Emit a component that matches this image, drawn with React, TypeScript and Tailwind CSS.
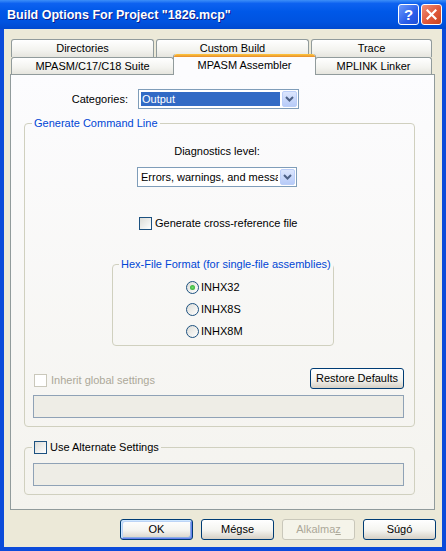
import React from 'react';

// XP "Luna" style build options dialog

function Chevron() {
  return (
    <svg width="9" height="6" viewBox="0 0 9 6">
      <path d="M1 1 L4.5 4.5 L8 1" fill="none" stroke="#4D6185" strokeWidth="2" />
    </svg>
  );
}

function Combo({ value, selected, className }: { value: string; selected?: boolean; className: string }) {
  return (
    <div className={`flex h-[20px] items-stretch gap-[1px] border border-[#7F9DB9] bg-white p-[1px] ${className}`}>
      <div
        className={`m-[1px] flex flex-1 items-center overflow-hidden whitespace-nowrap px-[1px] ${
          selected ? 'bg-[#316AC5] text-white' : 'text-black'
        }`}
      >
        {value}
      </div>
      <div className="flex w-[15px] items-center justify-center rounded-[2px] border border-[#BBCEF8] bg-[linear-gradient(to_bottom,#DCE6FD,#B7CBF8)]">
        <Chevron />
      </div>
    </div>
  );
}

function CheckBox({ disabled }: { disabled?: boolean }) {
  return (
    <span
      className={`inline-block h-[13px] w-[13px] shrink-0 border ${
        disabled ? 'border-[#CAC8BB] bg-white' : 'border-[#1C5180] bg-[linear-gradient(135deg,#DCDCD7,#FFFFFF)]'
      }`}
    />
  );
}

function Radio({ checked }: { checked?: boolean }) {
  return (
    <span className="flex h-[13px] w-[13px] shrink-0 items-center justify-center rounded-full border border-[#1C5180] bg-[linear-gradient(135deg,#DCDCD7,#FFFFFF)]">
      {checked && <span className="h-[5px] w-[5px] rounded-full bg-[radial-gradient(circle,#6FDC6F,#21A121)]" />}
    </span>
  );
}

function XPButton({
  children,
  className = 'w-[73px]',
  isDefault,
  disabled,
}: {
  children: React.ReactNode;
  className?: string;
  isDefault?: boolean;
  disabled?: boolean;
}) {
  if (disabled) {
    return (
      <button className={`h-[21px] rounded-[3px] border border-[#C9C7BA] bg-[#F5F4EA] text-[#ACA899] ${className}`}>
        {children}
      </button>
    );
  }
  return (
    <button
      className={`h-[21px] rounded-[3px] border border-[#003C74] bg-[linear-gradient(to_bottom,#FFFFFF,#F4F4F0_55%,#D6D0C5)] text-black ${
        isDefault
          ? 'shadow-[inset_1px_1px_0_#CEE7FF,inset_-1px_-1px_0_#6982EE,inset_2px_2px_0_#BCD4F6,inset_-2px_-2px_0_#89ADE4]'
          : ''
      } ${className}`}
    >
      {children}
    </button>
  );
}

function Tab({ label, className }: { label: string; className: string }) {
  return (
    <div
      className={`flex items-center justify-center rounded-t-[3px] border border-b-0 border-[#919B9C] bg-[linear-gradient(to_bottom,#FFFFFF,#F3F3EF_60%,#E6E5DE)] ${className}`}
    >
      {label}
    </div>
  );
}

function ActiveTab({ label, className }: { label: string; className: string }) {
  return (
    <div className={`relative z-10 -mb-px -mt-[3px] flex flex-col rounded-t-[3px] border-x border-[#919B9C] bg-[#FCFCFE] ${className}`}>
      <div className="h-[3px] rounded-t-[3px] bg-[linear-gradient(to_bottom,#FFC83C,#E68B2C)]" />
      <div className="flex flex-1 items-start justify-center pt-[2px]">{label}</div>
    </div>
  );
}

function Field() {
  return <div className="ml-[8px] h-[23px] w-[371px] border border-[#8FA2B6] bg-[#EEEDE6]" />;
}

export default function App() {
  return (
    <div className="flex h-[551px] w-[446px] flex-col bg-[#0B4BDA] text-[11px] leading-[13px] text-black [font-family:'Liberation_Sans',Arial,sans-serif]">
      {/* title bar */}
      <div className="flex h-[29px] shrink-0 items-center justify-between bg-[linear-gradient(to_bottom,#3D8FF8_0%,#0D62F0_12%,#0058E8_40%,#0053E0_75%,#0049D0_100%)] pl-[7px] pr-[4px]">
        <span className="pt-[1px] text-[12.5px] font-bold text-white [text-shadow:1px_1px_0_#0F1D88]">
          Build Options For Project "1826.mcp"
        </span>
        <div className="flex gap-[2px]">
          <div className="flex h-[21px] w-[21px] items-center justify-center rounded-[3px] border border-white bg-[linear-gradient(135deg,#6E9BFB,#2A5EEA_60%,#1F4FD8)] text-[15px] font-bold text-white">
            ?
          </div>
          <div className="flex h-[21px] w-[21px] items-center justify-center rounded-[3px] border border-white bg-[linear-gradient(135deg,#F0907A,#E0583A_55%,#C8441F)]">
            <svg width="11" height="11" viewBox="0 0 11 11">
              <path d="M1.5 1.5 L9.5 9.5 M9.5 1.5 L1.5 9.5" stroke="white" strokeWidth="2.2" strokeLinecap="square" />
            </svg>
          </div>
        </div>
      </div>

      {/* dialog body */}
      <div className="mx-[4px] mb-[4px] flex flex-1 flex-col bg-[#ECE9D8] pl-[6px] pt-[10px]">
        {/* tab strip */}
        <div className="ml-[1px] flex h-[18px]">
          <Tab label="Directories" className="w-[143px]" />
          <Tab label="Custom Build" className="ml-[2px] w-[153px]" />
          <Tab label="Trace" className="ml-[2px] w-[121px]" />
        </div>
        <div className="ml-[1px] flex h-[17px]">
          <Tab label="MPASM/C17/C18 Suite" className="w-[163px]" />
          <ActiveTab label="MPASM Assembler" className="-ml-px h-[21px] w-[143px]" />
          <Tab label="MPLINK Linker" className="-ml-px w-[117px]" />
        </div>

        {/* tab page */}
        <div className="flex h-[436px] w-[425px] flex-col border border-[#919B9C] bg-[linear-gradient(to_bottom,#FCFCFE,#F4F3EE)]">
          <div className="mt-[14px] flex h-[20px] items-center">
            <span className="w-[117px] text-right">Categories:</span>
            <Combo value="Output" selected className="ml-[10px] w-[161px]" />
          </div>

          <fieldset className="ml-[13px] mt-[8px] w-[391px] rounded-[4px] border border-[#D0D0BF] pb-[8px]">
            <legend className="ml-[7px] px-[2px] text-[#0046D5]">Generate Command Line</legend>

            <div className="ml-[112px] mt-[15px] flex w-[160px] flex-col">
              <span className="text-center">Diagnostics level:</span>
              <Combo value="Errors, warnings, and messages" className="mt-[9px] w-[160px]" />
            </div>

            <div className="ml-[114px] mt-[30px] flex items-center gap-[3px]">
              <CheckBox />
              <span>Generate cross-reference file</span>
            </div>

            <fieldset className="ml-[87px] mt-[28px] w-[214px] rounded-[4px] border border-[#D0D0BF] pb-[7px]">
              <legend className="ml-[6px] whitespace-nowrap px-[2px] text-[#0046D5]">
                Hex-File Format (for single-file assemblies)
              </legend>
              <div className="ml-[73px] mt-[10px] flex flex-col gap-[9px]">
                <label className="flex items-center gap-[2px]">
                  <Radio checked />
                  <span>INHX32</span>
                </label>
                <label className="flex items-center gap-[2px]">
                  <Radio />
                  <span>INHX8S</span>
                </label>
                <label className="flex items-center gap-[2px]">
                  <Radio />
                  <span>INHX8M</span>
                </label>
              </div>
            </fieldset>

            <div className="ml-[9px] mt-[22px] flex h-[21px] w-[370px] items-start justify-between">
              <div className="mt-[6px] flex items-center gap-[4px] text-[#ACA899]">
                <CheckBox disabled />
                <span>Inherit global settings</span>
              </div>
              <XPButton className="w-[94px]">Restore Defaults</XPButton>
            </div>
            <div className="mt-[6px]">
              <Field />
            </div>
          </fieldset>

          <fieldset className="ml-[13px] mt-[14px] w-[391px] rounded-[4px] border border-[#D0D0BF] pb-[8px]">
            <legend className="ml-[7px] px-[2px]">
              <span className="flex items-center gap-[3px]">
                <CheckBox />
                <span>Use Alternate Settings</span>
              </span>
            </legend>
            <div className="mt-[9px]">
              <Field />
            </div>
          </fieldset>
        </div>

        {/* dialog buttons */}
        <div className="mt-[9px] flex justify-end gap-[8px] pr-[6px]">
          <XPButton isDefault>OK</XPButton>
          <XPButton>Mégse</XPButton>
          <XPButton disabled>
            Alkalma<u>z</u>
          </XPButton>
          <XPButton>Súgó</XPButton>
        </div>
      </div>
    </div>
  );
}
